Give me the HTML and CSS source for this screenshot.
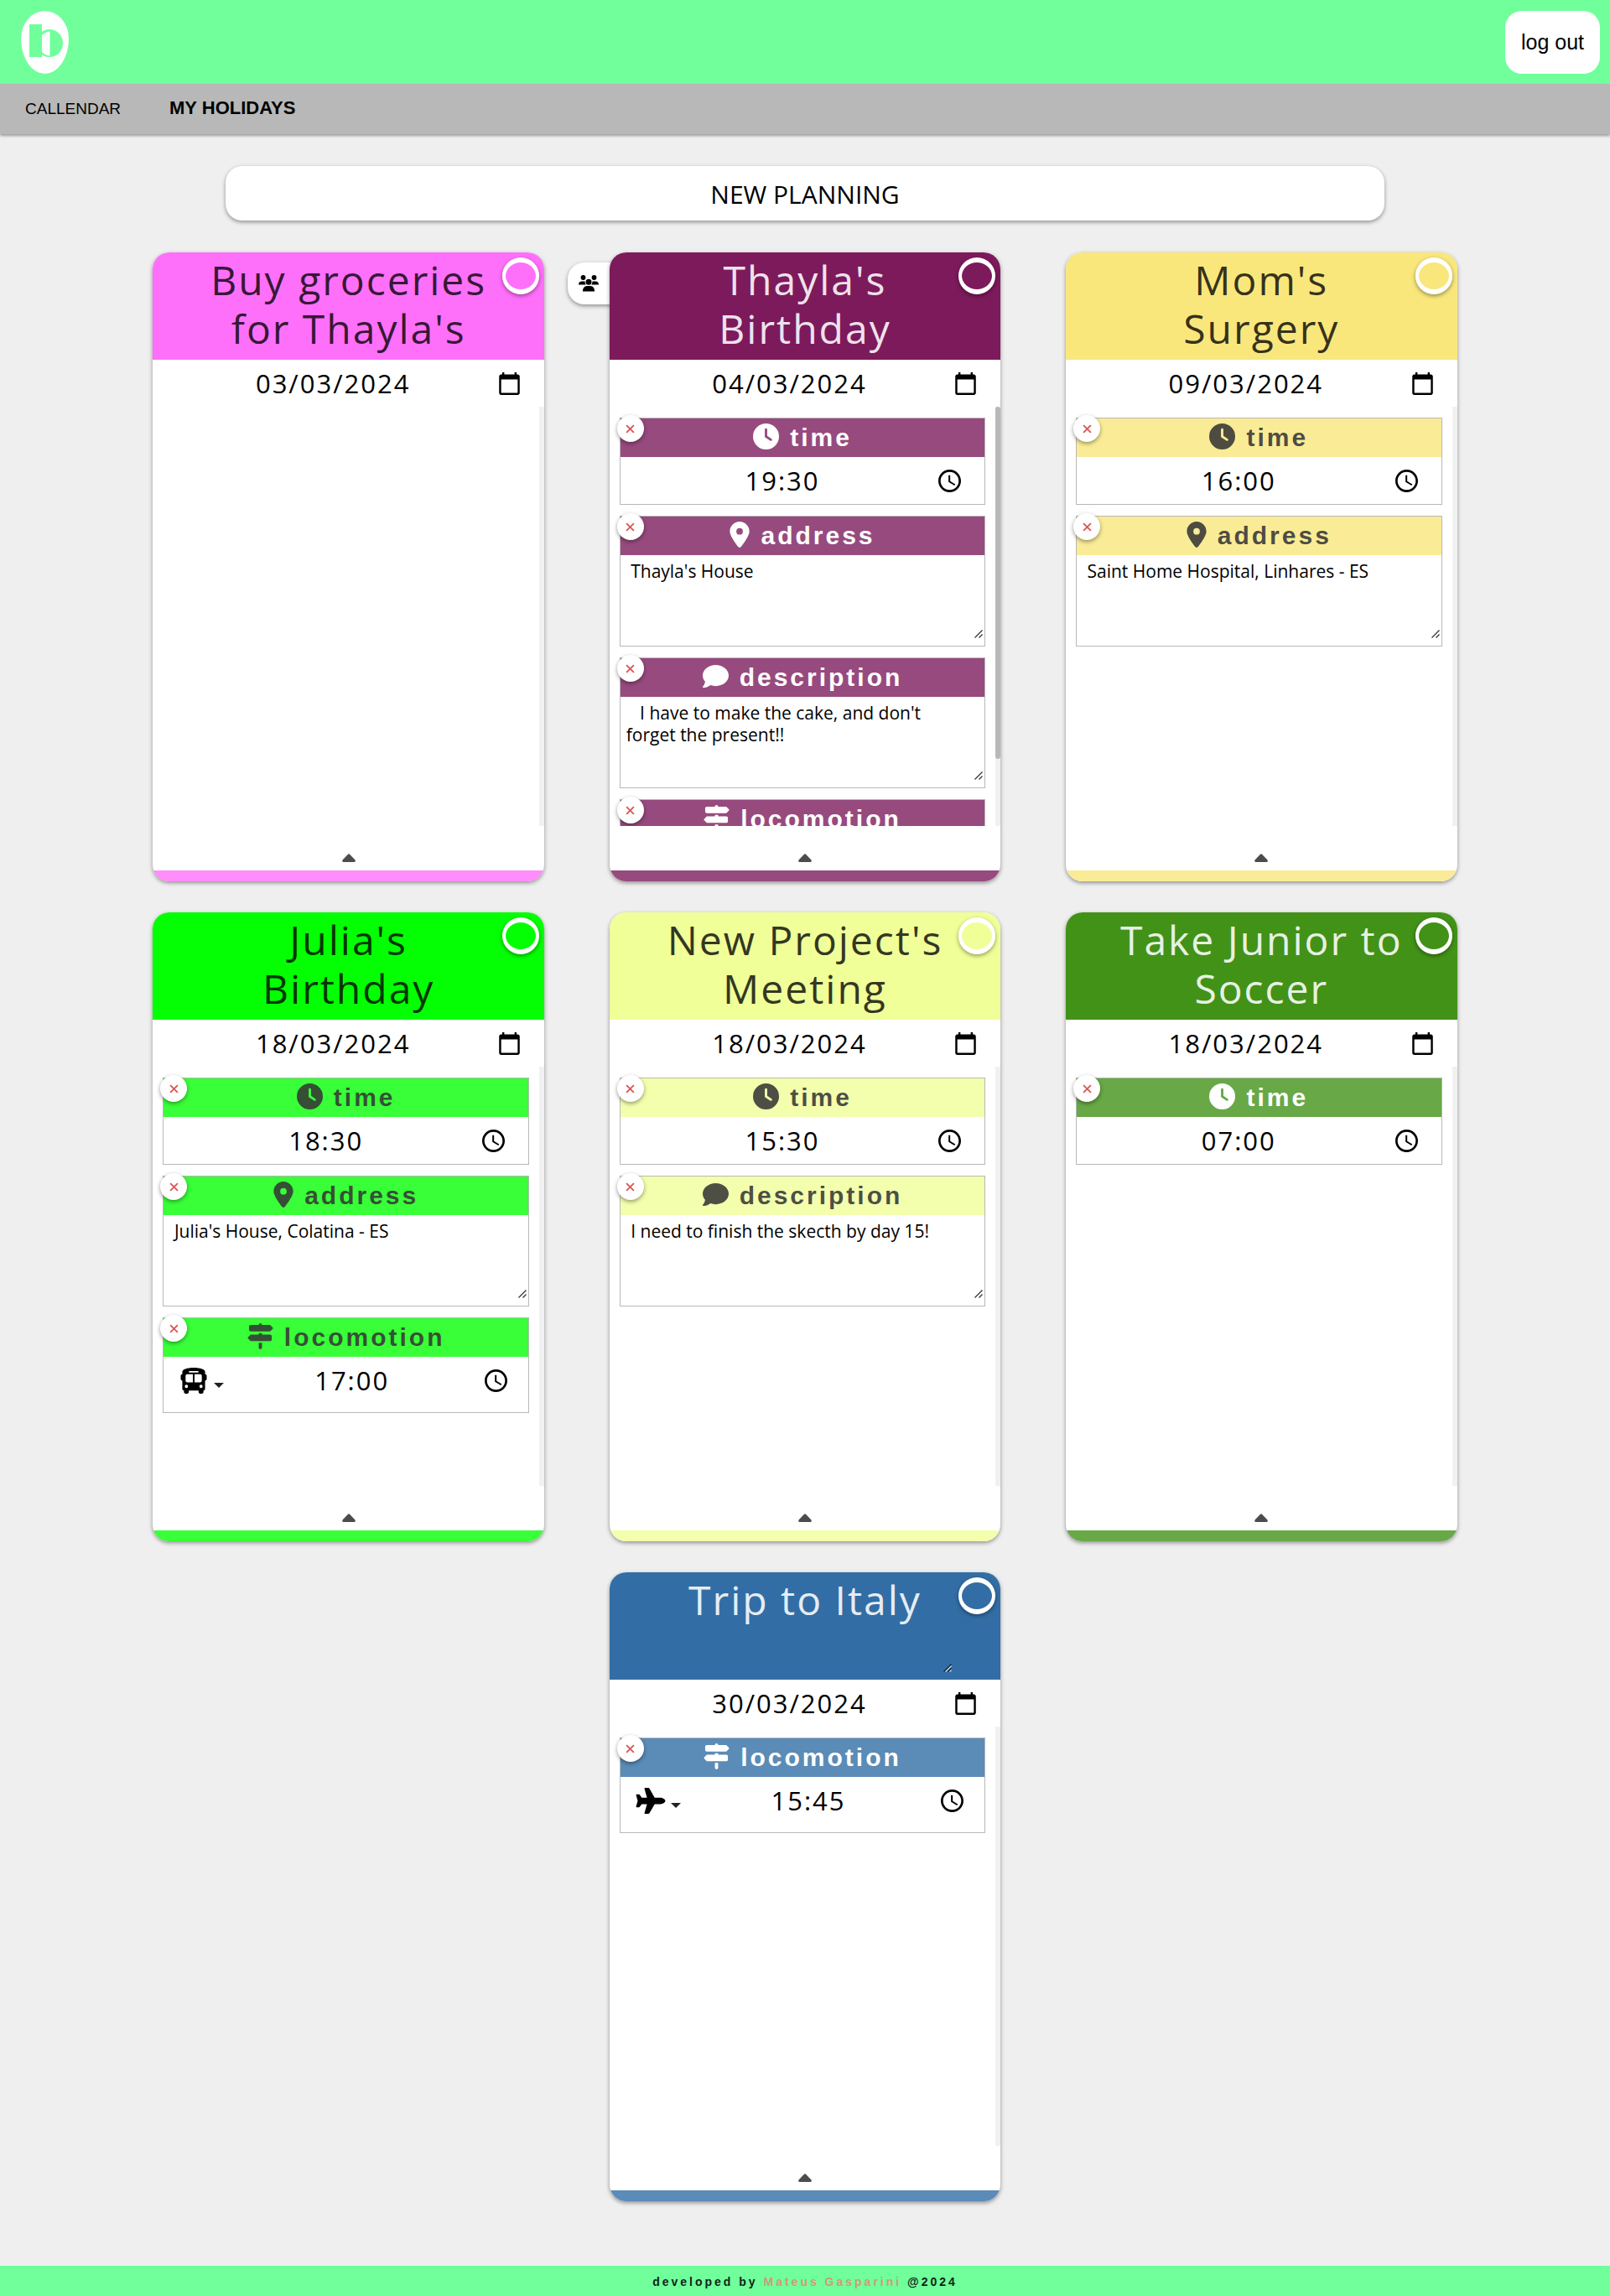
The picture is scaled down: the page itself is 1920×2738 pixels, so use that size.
FILE: index.html
```html
<!DOCTYPE html>
<html lang="en">
<head>
<meta charset="utf-8">
<meta name="viewport" content="width=device-width, initial-scale=1">
<title>My holidays</title>
<link rel="stylesheet" href="styles.css">
</head>
<body>
<svg class="sprite" aria-hidden="true">
  <symbol id="i-clock" viewBox="0 0 512 512"><path d="M256 0a256 256 0 1 1 0 512A256 256 0 1 1 256 0zM232 120V256c0 8 4 15.500 10.700 20l96 64c11 7.400 25.900 4.400 33.300-6.700s4.400-25.900-6.700-33.300L280 243.200V120c0-13.300-10.700-24-24-24s-24 10.700-24 24z"/></symbol>
  <symbol id="i-pin" viewBox="0 0 384 512"><path d="M215.700 499.200C267 435 384 279.400 384 192C384 86 298 0 192 0S0 86 0 192c0 87.400 117 243 168.300 307.200c12.300 15.300 35.100 15.300 47.400 0zM192 128a64 64 0 1 1 0 128 64 64 0 1 1 0-128z"/></symbol>
  <symbol id="i-comment" viewBox="0 0 512 512"><path d="M512 240c0 114.900-114.600 208-256 208c-37.100 0-72.300-6.400-104.100-17.900c-11.900 8.700-31.300 20.600-54.300 30.600C73.600 471.100 44.700 480 16 480c-6.500 0-12.300-3.900-14.800-9.900c-2.500-6-1.100-12.800 3.400-17.400l.3-.3c.3-.3 .7-.7 1.300-1.400c1.100-1.200 2.800-3.100 4.900-5.700c4.100-5 9.600-12.400 15.200-21.600c10-16.600 19.500-38.400 21.400-62.900C17.700 326.800 0 285.100 0 240C0 125.100 114.600 32 256 32s256 93.100 256 208z"/></symbol>
  <symbol id="i-signs" viewBox="0 0 512 512"><path d="M224 32H64C46.300 32 32 46.300 32 64v64c0 17.700 14.300 32 32 32H441.400c4.200 0 8.300-1.700 11.300-4.700l48-48c6.200-6.200 6.200-16.400 0-22.600l-48-48c-3-3-7.100-4.700-11.300-4.700H288c0-17.700-14.300-32-32-32s-32 14.300-32 32zM480 256c0-17.700-14.300-32-32-32H288V192H224v32H70.600c-4.200 0-8.300 1.700-11.300 4.700l-48 48c-6.200 6.200-6.200 16.400 0 22.600l48 48c3 3 7.100 4.700 11.300 4.700H448c17.700 0 32-14.300 32-32V256zM288 480V384H224v96c0 17.700 14.300 32 32 32s32-14.300 32-32z"/></symbol>
  <symbol id="i-plane" viewBox="0 0 576 512"><path d="M482.300 192c34.200 0 93.700 29 93.700 64c0 36-59.500 64-93.700 64l-116.600 0L265.200 495.900c-5.700 10-16.300 16.100-27.800 16.100l-56.200 0c-10.600 0-18.300-10.200-15.400-20.400l49-171.600L112 320 68.800 377.600c-3 4-7.800 6.400-12.800 6.400l-42 0c-7.800 0-14-6.300-14-14c0-1.300 .2-2.600 .5-3.900L32 256 .5 145.900c-.4-1.300-.5-2.600-.5-3.900c0-7.800 6.300-14 14-14l42 0c5 0 9.800 2.400 12.800 6.400L112 192l102.900 0-49-171.600C162.900 10.200 170.600 0 181.200 0l56.200 0c11.500 0 22.100 6.200 27.800 16.100L365.700 192l116.600 0z"/></symbol>
  <symbol id="i-bus" viewBox="0 0 512 512"><path d="M256 0C390.400 0 480 35.200 480 80V96l0 32c17.700 0 32 14.300 32 32v64c0 17.700-14.300 32-32 32l0 160c0 17.700-14.300 32-32 32v32c0 17.700-14.300 32-32 32H384c-17.700 0-32-14.300-32-32V448H160v32c0 17.700-14.300 32-32 32H96c-17.700 0-32-14.300-32-32l0-32c-17.700 0-32-14.300-32-32l0-160c-17.700 0-32-14.300-32-32V160c0-17.700 14.300-32 32-32h0V96h0V80C32 35.200 121.600 0 256 0zM96 160v96c0 17.700 14.300 32 32 32H240V128H128c-17.700 0-32 14.300-32 32zM272 288H384c17.700 0 32-14.300 32-32V160c0-17.700-14.300-32-32-32H272V288zM112 400a32 32 0 1 0 0-64 32 32 0 1 0 0 64zm288 0a32 32 0 1 0 0-64 32 32 0 1 0 0 64zM352 80c0-8.800-7.200-16-16-16H176c-8.800 0-16 7.200-16 16s7.200 16 16 16H336c8.800 0 16-7.200 16-16z"/></symbol>
  <symbol id="i-watch" viewBox="2 2 20 20"><path d="M11.990 2C6.470 2 2 6.480 2 12s4.470 10 9.990 10C17.520 22 22 17.520 22 12S17.520 2 11.990 2zM12 20c-4.420 0-8-3.580-8-8s3.580-8 8-8 8 3.580 8 8-3.580 8-8 8zm.5-13H11v6l5.250 3.150.75-1.230-4.500-2.670z"/></symbol>
  <symbol id="i-calendar" viewBox="2 1 20 22"><path d="M20 3h-1V1h-2v2H7V1H5v2H4c-1.100 0-2 .9-2 2v16c0 1.100.9 2 2 2h16c1.100 0 2-.9 2-2V5c0-1.100-.9-2-2-2zm0 18H4V8h16v13z"/></symbol>
  <symbol id="i-x" viewBox="0 0 10 10"><path d="M1 1l8 8M9 1l-8 8" fill="none" stroke="currentColor" stroke-width="1.800"/></symbol>
  <symbol id="i-up" viewBox="0 0 16 10"><path d="M7 .7Q8 0 9 .7L15.500 7.500Q16.300 10 14.500 10H1.500Q-.3 10 .5 7.500z"/></symbol>
  <symbol id="i-people" viewBox="0 0 24 20"><circle cx="5.500" cy="3" r="2.900"/><circle cx="18.500" cy="3" r="2.900"/><circle cx="12" cy="8.300" r="3.500"/><path d="M0 11.500Q0 7.500 4 7.500H7.500Q7.500 9.800 8.800 11.500zM24 11.500Q24 7.500 20 7.500H16.500Q16.500 9.800 15.200 11.500zM5 19.500Q5 13 10 13H14Q19 13 19 19.500z"/></symbol>
</svg>

<header class="topbar">
  <a class="logo" href="#" aria-label="Home">
    <svg viewBox="0 0 57 75" aria-hidden="true"><ellipse cx="34" cy="38.500" rx="16" ry="16.500"/><path class="logo-gap" d="M25 29Q30 24.500 34.500 24.500V53.500Q30 53.500 25 49z"/><rect x="10" y="16" width="15" height="39"/></svg>
  </a>
  <button class="logout" type="button">log out</button>
</header>
<nav class="tabs">
  <a href="#">CALLENDAR</a>
  <a class="current" href="#">MY HOLIDAYS</a>
</nav>

<main class="page">
  <button class="new-planning" type="button">NEW PLANNING</button>

  <div class="board">
    <article class="card pink">
      <div class="face">
        <header class="head"><textarea class="title" aria-label="Title">Buy groceries for Thayla's</textarea><button class="ring" type="button" aria-label="Change colour"></button></header>
        <div class="when date"><input type="text" aria-label="Date" value="03/03/2024"><button type="button" aria-label="Open calendar"><svg><use href="#i-calendar"/></svg></button></div>
        <div class="items"></div>
        <button class="fold" type="button" aria-label="Collapse"><svg><use href="#i-up"/></svg></button>
      </div>
    </article>

    <article class="card purple light">
      <button class="share" type="button" aria-label="Guests"><svg><use href="#i-people"/></svg></button>
      <div class="face">
        <header class="head"><textarea class="title" aria-label="Title">Thayla's Birthday</textarea><button class="ring" type="button" aria-label="Change colour"></button></header>
        <div class="when date"><input type="text" aria-label="Date" value="04/03/2024"><button type="button" aria-label="Open calendar"><svg><use href="#i-calendar"/></svg></button></div>
        <div class="items">
          <section class="item">
            <button class="remove" type="button" aria-label="Remove time"><svg><use href="#i-x"/></svg></button>
            <h3><svg><use href="#i-clock"/></svg>time</h3>
            <div class="when"><input type="text" aria-label="Time" value="19:30"><button type="button" aria-label="Pick time"><svg><use href="#i-watch"/></svg></button></div>
          </section>
          <section class="item">
            <button class="remove" type="button" aria-label="Remove address"><svg><use href="#i-x"/></svg></button>
            <h3><svg class="pin"><use href="#i-pin"/></svg>address</h3>
            <textarea class="note" aria-label="Address"> Thayla's House</textarea>
          </section>
          <section class="item">
            <button class="remove" type="button" aria-label="Remove description"><svg><use href="#i-x"/></svg></button>
            <h3><svg><use href="#i-comment"/></svg>description</h3>
            <textarea class="note" aria-label="Description">   I have to make the cake, and don't forget the present!!</textarea>
          </section>
          <section class="item">
            <button class="remove" type="button" aria-label="Remove locomotion"><svg><use href="#i-x"/></svg></button>
            <h3><svg><use href="#i-signs"/></svg>locomotion</h3>
            <div class="when travel"><button class="mode" type="button" aria-haspopup="true" aria-label="Transport"><svg><use href="#i-bus"/></svg></button><input type="text" aria-label="Departure"><button type="button" aria-label="Pick time"><svg><use href="#i-watch"/></svg></button></div>
          </section>
        </div>
        <span class="thumb"></span>
        <button class="fold" type="button" aria-label="Collapse"><svg><use href="#i-up"/></svg></button>
      </div>
    </article>

    <article class="card yellow">
      <div class="face">
        <header class="head"><textarea class="title" aria-label="Title">Mom's
Surgery</textarea><button class="ring" type="button" aria-label="Change colour"></button></header>
        <div class="when date"><input type="text" aria-label="Date" value="09/03/2024"><button type="button" aria-label="Open calendar"><svg><use href="#i-calendar"/></svg></button></div>
        <div class="items">
          <section class="item">
            <button class="remove" type="button" aria-label="Remove time"><svg><use href="#i-x"/></svg></button>
            <h3><svg><use href="#i-clock"/></svg>time</h3>
            <div class="when"><input type="text" aria-label="Time" value="16:00"><button type="button" aria-label="Pick time"><svg><use href="#i-watch"/></svg></button></div>
          </section>
          <section class="item">
            <button class="remove" type="button" aria-label="Remove address"><svg><use href="#i-x"/></svg></button>
            <h3><svg class="pin"><use href="#i-pin"/></svg>address</h3>
            <textarea class="note" aria-label="Address"> Saint Home Hospital, Linhares - ES</textarea>
          </section>
        </div>
        <button class="fold" type="button" aria-label="Collapse"><svg><use href="#i-up"/></svg></button>
      </div>
    </article>

    <article class="card lime">
      <div class="face">
        <header class="head"><textarea class="title" aria-label="Title">Julia's
Birthday</textarea><button class="ring" type="button" aria-label="Change colour"></button></header>
        <div class="when date"><input type="text" aria-label="Date" value="18/03/2024"><button type="button" aria-label="Open calendar"><svg><use href="#i-calendar"/></svg></button></div>
        <div class="items">
          <section class="item">
            <button class="remove" type="button" aria-label="Remove time"><svg><use href="#i-x"/></svg></button>
            <h3><svg><use href="#i-clock"/></svg>time</h3>
            <div class="when"><input type="text" aria-label="Time" value="18:30"><button type="button" aria-label="Pick time"><svg><use href="#i-watch"/></svg></button></div>
          </section>
          <section class="item">
            <button class="remove" type="button" aria-label="Remove address"><svg><use href="#i-x"/></svg></button>
            <h3><svg class="pin"><use href="#i-pin"/></svg>address</h3>
            <textarea class="note" aria-label="Address"> Julia's House, Colatina - ES</textarea>
          </section>
          <section class="item">
            <button class="remove" type="button" aria-label="Remove locomotion"><svg><use href="#i-x"/></svg></button>
            <h3><svg><use href="#i-signs"/></svg>locomotion</h3>
            <div class="when travel"><button class="mode" type="button" aria-haspopup="true" aria-label="Transport"><svg><use href="#i-bus"/></svg></button><input type="text" aria-label="Departure" value="17:00"><button type="button" aria-label="Pick time"><svg><use href="#i-watch"/></svg></button></div>
          </section>
        </div>
        <button class="fold" type="button" aria-label="Collapse"><svg><use href="#i-up"/></svg></button>
      </div>
    </article>

    <article class="card pale">
      <div class="face">
        <header class="head"><textarea class="title" aria-label="Title">New Project's Meeting</textarea><button class="ring" type="button" aria-label="Change colour"></button></header>
        <div class="when date"><input type="text" aria-label="Date" value="18/03/2024"><button type="button" aria-label="Open calendar"><svg><use href="#i-calendar"/></svg></button></div>
        <div class="items">
          <section class="item">
            <button class="remove" type="button" aria-label="Remove time"><svg><use href="#i-x"/></svg></button>
            <h3><svg><use href="#i-clock"/></svg>time</h3>
            <div class="when"><input type="text" aria-label="Time" value="15:30"><button type="button" aria-label="Pick time"><svg><use href="#i-watch"/></svg></button></div>
          </section>
          <section class="item">
            <button class="remove" type="button" aria-label="Remove description"><svg><use href="#i-x"/></svg></button>
            <h3><svg><use href="#i-comment"/></svg>description</h3>
            <textarea class="note" aria-label="Description"> I need to finish the skecth by day 15!</textarea>
          </section>
        </div>
        <button class="fold" type="button" aria-label="Collapse"><svg><use href="#i-up"/></svg></button>
      </div>
    </article>

    <article class="card forest light">
      <div class="face">
        <header class="head"><textarea class="title" aria-label="Title">Take Junior to Soccer</textarea><button class="ring" type="button" aria-label="Change colour"></button></header>
        <div class="when date"><input type="text" aria-label="Date" value="18/03/2024"><button type="button" aria-label="Open calendar"><svg><use href="#i-calendar"/></svg></button></div>
        <div class="items">
          <section class="item">
            <button class="remove" type="button" aria-label="Remove time"><svg><use href="#i-x"/></svg></button>
            <h3><svg><use href="#i-clock"/></svg>time</h3>
            <div class="when"><input type="text" aria-label="Time" value="07:00"><button type="button" aria-label="Pick time"><svg><use href="#i-watch"/></svg></button></div>
          </section>
        </div>
        <button class="fold" type="button" aria-label="Collapse"><svg><use href="#i-up"/></svg></button>
      </div>
    </article>

    <article class="card blue light">
      <div class="face">
        <header class="head"><textarea class="title resizable" aria-label="Title">Trip to Italy</textarea><button class="ring" type="button" aria-label="Change colour"></button></header>
        <div class="when date"><input type="text" aria-label="Date" value="30/03/2024"><button type="button" aria-label="Open calendar"><svg><use href="#i-calendar"/></svg></button></div>
        <div class="items">
          <section class="item">
            <button class="remove" type="button" aria-label="Remove locomotion"><svg><use href="#i-x"/></svg></button>
            <h3><svg><use href="#i-signs"/></svg>locomotion</h3>
            <div class="when travel"><button class="mode" type="button" aria-haspopup="true" aria-label="Transport"><svg><use href="#i-plane"/></svg></button><input type="text" aria-label="Departure" value="15:45"><button type="button" aria-label="Pick time"><svg><use href="#i-watch"/></svg></button></div>
          </section>
        </div>
        <button class="fold" type="button" aria-label="Collapse"><svg><use href="#i-up"/></svg></button>
      </div>
    </article>
  </div>
</main>

<footer class="credits">developed by <a href="#">Mateus Gasparini</a> @2024</footer>
</body>
</html>
```
FILE: styles.css
```css
* { box-sizing: border-box; }

:root {
  --mint: #70ff9b;
  --gray: #b8b8b8;
  --humanist: "Open Sans", "Noto Sans", sans-serif;
  --grotesque: "Liberation Sans", Arial, sans-serif;
}

body {
  margin: 0;
  min-height: 100vh;
  display: flex;
  flex-direction: column;
  background: #efefef;
  color: #000;
  font-family: var(--grotesque);
}

button, input, textarea {
  margin: 0;
  padding: 0;
  border: 0;
  outline: 0;
  background: none;
  color: inherit;
  font: inherit;
}

svg { display: block; fill: currentColor; }
a { color: inherit; text-decoration: none; }
.sprite { display: none; }

/* top of the page */
.topbar {
  display: flex;
  justify-content: space-between;
  align-items: center;
  height: 100px;
  padding: 0 12px 0 25px;
  background: var(--mint);
}
.logo {
  width: 57px;
  height: 75px;
  border-radius: 50% / 44% 44% 56% 56%;
  background: #fff;
  color: var(--mint);
}
.logo-gap { fill: #fff; }
.logout {
  width: 113px;
  height: 75px;
  border-radius: 20px;
  background: #fff;
  font-size: 25px;
}
.tabs {
  display: flex;
  align-items: baseline;
  gap: 58px;
  height: 60px;
  padding: 16px 30px;
  background: var(--gray);
  box-shadow: 0 2px 3px rgba(0, 0, 0, .35);
  font-size: 19px;
}
.tabs .current { font-size: 22px; font-weight: 700; }

.page {
  flex: 1;
  display: flex;
  flex-direction: column;
  align-items: center;
  gap: 38px;
  padding: 38px 0 76px;
}
.new-planning {
  width: 72%;
  height: 65px;
  padding-top: 2px;
  border-radius: 20px;
  background: #fff;
  box-shadow: 0 2px 5px rgba(0, 0, 0, .4);
  font-family: var(--humanist);
  font-size: 30px;
}

/* cards */
.board {
  width: 81%;
  display: flex;
  flex-wrap: wrap;
  justify-content: center;
  gap: 37px 5%;
}
.card {
  position: relative;
  flex: 0 0 30%;
  min-width: 0;
  --ink: rgba(0, 0, 0, .8);
  --label: rgba(54, 54, 54, .88);
}
.light { --ink: rgba(255, 255, 255, .9); --label: #fff; }
.pink { --head: #ff70fa; --soft: #ff8dfb; }
.purple { --head: #7d1a5c; --soft: #974a7e; }
.yellow { --head: #f9e77c; --soft: #faec96; }
.lime { --head: #04ff04; --soft: #38ff38; }
.pale { --head: #f0ff98; --soft: #f3ffad; }
.forest { --head: #429218; --soft: #68a846; }
.blue { --head: #326ea5; --soft: #5b8bb7; }

.face {
  position: relative;
  overflow: hidden;
  border-radius: 20px;
  background: #fff;
  box-shadow: 0 2px 5px rgba(0, 0, 0, .4);
}
.head {
  position: relative;
  height: 128px;
  padding-top: 4px;
  background: var(--head);
  text-align: center;
}
.title {
  width: 76%;
  height: 117px;
  overflow: hidden;
  resize: none;
  color: var(--ink);
  font-family: var(--humanist);
  font-size: 48px;
  line-height: 58px;
  letter-spacing: 2px;
  text-align: center;
}
.title.resizable, .note {
  resize: both;
  background: url("data:image/svg+xml,%3Csvg xmlns='http://www.w3.org/2000/svg' width='10' height='10'%3E%3Cpath d='M.5 9.500l9-9M5.500 9.500l4-4' stroke='%23333' stroke-width='1.300' fill='none'/%3E%3C/svg%3E") no-repeat right 2px bottom 2px;
}
.title.resizable {
  background-image: url("data:image/svg+xml,%3Csvg xmlns='http://www.w3.org/2000/svg' width='10' height='10'%3E%3Cpath d='M2.500 9.500l7-7M7.500 9.500l2-2' stroke='%23dde6ef' stroke-width='1.300'/%3E%3Cpath d='M.5 9.500l9-9M5.500 9.500l4-4' stroke='%230f2437' stroke-width='1.300' fill='none'/%3E%3C/svg%3E");
}
textarea::-webkit-resizer { display: none; }
.ring {
  position: absolute;
  top: 6px;
  right: 6px;
  width: 44px;
  height: 44px;
  border: solid #fff;
  border-width: 6px 4px;
  border-radius: 50%;
  box-shadow: 0 2px 5px rgba(0, 0, 0, .4);
}
.share {
  position: absolute;
  top: 12px;
  left: -50px;
  width: 60px;
  height: 50px;
  padding-left: 13px;
  border-radius: 20px 0 0 20px;
  background: #fff;
  box-shadow: 0 2px 5px rgba(0, 0, 0, .4);
}
.share svg { width: 24px; height: 20px; }

.when {
  display: flex;
  align-items: center;
  gap: 12px;
  height: 56px;
  padding: 0 28px 0 19px;
}
.when.date { padding: 0 29px; }
.when input {
  flex: 1;
  min-width: 0;
  font-family: var(--humanist);
  font-size: 31px;
  letter-spacing: 2px;
  text-align: center;
}
.when svg { width: 27px; height: 27px; }
.when.date svg { width: 25px; }
.when.travel { margin-bottom: 10px; padding: 0 25px 0 18px; }
.mode { display: flex; align-items: center; gap: 6px; margin-right: -6px; }
.when .mode svg { width: 36px; height: 31px; }
.mode::after {
  content: "";
  margin-top: 12px;
  border: solid transparent;
  border-width: 6px 6px 0;
  border-top-color: #222;
}

/* the light strip on the right is the scroll track */
.items {
  display: flex;
  flex-direction: column;
  gap: 13px;
  height: 500px;
  padding: 13px 12px;
  border-right: 6px solid #f1f1f1;
  overflow-y: auto;
  scrollbar-width: none;
}
.thumb {
  position: absolute;
  top: 184px;
  right: 0;
  width: 6px;
  height: 420px;
  border-radius: 3px;
  background: var(--gray);
}

.item { position: relative; flex: none; border: 1px solid var(--gray); }
.item h3 {
  display: flex;
  justify-content: center;
  align-items: center;
  gap: 13px;
  height: 46px;
  margin: 0;
  background: var(--soft);
  color: var(--label);
  font-size: 30px;
  letter-spacing: 3px;
}
.item h3 svg { width: 31px; height: 31px; margin-bottom: 3px; }
.item h3 .pin { width: 24px; }
.note {
  display: block;
  width: 100%;
  height: 101px;
  margin-bottom: 7px;
  padding: 6px 24px 6px 7px;
  overflow: hidden;
  font-family: var(--humanist);
  font-size: 21px;
  line-height: 26px;
}
.remove {
  position: absolute;
  top: -4px;
  left: -4px;
  width: 32px;
  height: 32px;
  display: grid;
  place-items: center;
  border-radius: 50%;
  background: #fff;
  box-shadow: 0 2px 5px rgba(0, 0, 0, .4);
  color: #dc5a5a;
}
.remove svg { width: 11px; height: 11px; }
.fold {
  display: flex;
  justify-content: center;
  align-items: flex-end;
  width: 100%;
  height: 66px;
  padding-bottom: 10px;
  border-bottom: 13px solid var(--soft);
  color: #4c4c4c;
}
.fold svg { width: 16px; height: 10px; }

.credits {
  height: 36px;
  background: var(--mint);
  color: #0d2417;
  font-size: 14px;
  font-weight: 700;
  line-height: 38px;
  letter-spacing: 3px;
  text-align: center;
}
.credits a { color: #cf9b78; }
```
